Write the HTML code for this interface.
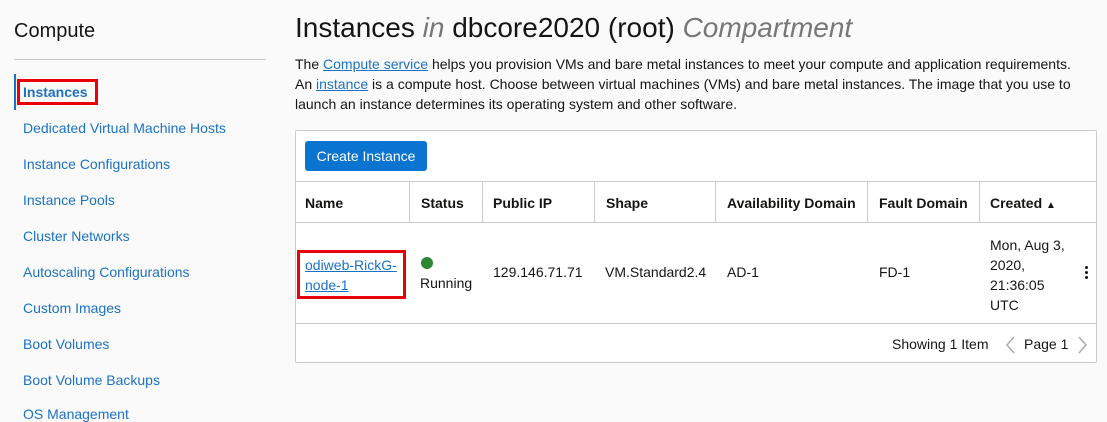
<!DOCTYPE html>
<html><head><style>
*{margin:0;padding:0;box-sizing:border-box}
body{width:1107px;height:417px;overflow:hidden;background:#fafafa;font-family:"Liberation Sans",Arial,sans-serif;color:#161513;position:relative}
.a{position:absolute}
.nav{left:23px;font-size:14px;color:#1b72c4;white-space:nowrap}
a{color:#1b72c4}
.cell{position:absolute;font-size:14px}
.vl{position:absolute;top:182px;width:1px;height:40px;background:#c9ccd0}
.h{position:absolute;top:195px;font-size:14px;font-weight:bold}
</style></head><body>
<div class="a" style="left:14px;top:20px;font-size:20px">Compute</div>
<div class="a" style="left:14px;top:59px;width:252px;height:1px;background:#c9ccd0"></div>
<div class="a" style="left:14px;top:74px;width:2px;height:36px;background:#1b72c4"></div>
<div class="a" style="left:17px;top:79px;width:81px;height:26px;border:3px solid #e8000b"></div>
<div class="a nav" style="top:84px;font-weight:bold">Instances</div>
<div class="a nav" style="top:120px">Dedicated Virtual Machine Hosts</div>
<div class="a nav" style="top:156px">Instance Configurations</div>
<div class="a nav" style="top:192px">Instance Pools</div>
<div class="a nav" style="top:228px">Cluster Networks</div>
<div class="a nav" style="top:264px">Autoscaling Configurations</div>
<div class="a nav" style="top:300px">Custom Images</div>
<div class="a nav" style="top:336px">Boot Volumes</div>
<div class="a nav" style="top:372px">Boot Volume Backups</div>
<div class="a nav" style="top:406px">OS Management</div>

<div class="a" style="left:295px;top:12px;font-size:28px;white-space:nowrap">Instances <i style="color:#777">in</i> dbcore2020 (root) <i style="color:#777">Compartment</i></div>
<div class="a" style="left:295px;top:54px;width:785px;font-size:14px;line-height:20px">The <a href="#">Compute service</a> helps you provision VMs and bare metal instances to meet your compute and application requirements. An <a href="#">instance</a> is a compute host. Choose between virtual machines (VMs) and bare metal instances. The image that you use to launch an instance determines its operating system and other software.</div>

<div class="a" style="left:295px;top:130px;width:802px;height:233px;background:#fff;border:1px solid #c9ccd0;border-radius:2px"></div>
<div class="a" style="left:305px;top:141px;width:122px;height:30px;background:#0b73d0;border-radius:3px;color:#fff;font-size:14px;line-height:30px;text-align:center">Create Instance</div>
<div class="a" style="left:296px;top:181px;width:800px;height:1px;background:#c9ccd0"></div>
<div class="a" style="left:296px;top:222px;width:800px;height:1px;background:#c9ccd0"></div>
<div class="a" style="left:296px;top:323px;width:800px;height:1px;background:#c9ccd0"></div>
<div class="vl" style="left:409px"></div><div class="vl" style="left:482px"></div><div class="vl" style="left:594px"></div><div class="vl" style="left:715px"></div><div class="vl" style="left:867px"></div><div class="vl" style="left:979px"></div>
<div class="h" style="left:305px">Name</div>
<div class="h" style="left:421px">Status</div>
<div class="h" style="left:493px">Public IP</div>
<div class="h" style="left:606px">Shape</div>
<div class="h" style="left:727px">Availability Domain</div>
<div class="h" style="left:879px">Fault Domain</div>
<div class="h" style="left:990px">Created <span style="font-size:10px">&#9650;</span></div>

<div class="a" style="left:297px;top:250px;width:109px;height:49px;border:3px solid #e8000b"></div>
<div class="cell" style="left:305px;top:255px;line-height:20px"><a href="#">odiweb-RickG-<br>node-1</a></div>
<div class="a" style="left:421px;top:257px;width:12px;height:12px;border-radius:50%;background:#2e8534"></div>
<div class="cell" style="left:420px;top:275px">Running</div>
<div class="cell" style="left:493px;top:264px">129.146.71.71</div>
<div class="cell" style="left:605px;top:264px">VM.Standard2.4</div>
<div class="cell" style="left:727px;top:264px">AD-1</div>
<div class="cell" style="left:879px;top:264px">FD-1</div>
<div class="cell" style="left:990px;top:235px;line-height:20px">Mon, Aug 3,<br>2020,<br>21:36:05<br>UTC</div>
<div class="a" style="left:1085px;top:266px;width:3px;height:3px;background:#161513;border-radius:50%;box-shadow:0 5px 0 #161513,0 10px 0 #161513"></div>

<div class="cell" style="left:892px;top:336px">Showing 1 Item</div>
<svg class="a" style="left:1004px;top:335px" width="12" height="20"><path d="M10 2L3 10L10 18" fill="none" stroke="#aaa" stroke-width="1.5"/></svg>
<div class="cell" style="left:1024px;top:336px">Page 1</div>
<svg class="a" style="left:1077px;top:335px" width="12" height="20"><path d="M2 2L9 10L2 18" fill="none" stroke="#aaa" stroke-width="1.5"/></svg>
</body></html>
